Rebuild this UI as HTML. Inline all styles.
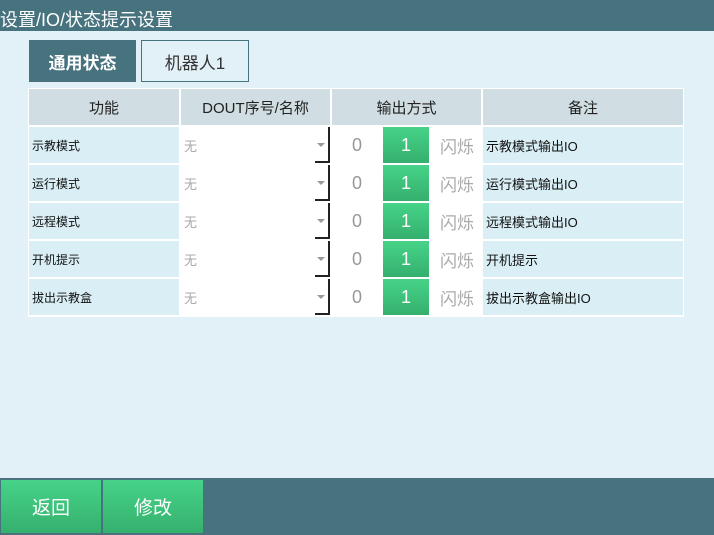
<!DOCTYPE html><html><head><meta charset="utf-8"><style>
*{margin:0;padding:0;box-sizing:border-box}
body{width:714px;height:535px;background:#e2f1f7;position:relative;overflow:hidden;font-family:"Liberation Sans","Noto Sans CJK SC",sans-serif}
.a{position:absolute}
.t{display:flex;align-items:center;justify-content:center}
.hd{background:#d0dde2;color:#222;font-size:15px}
.c1{background:#d9eff5;font-size:12px;color:#111;padding-left:3px;display:flex;align-items:center}
.dd{background:#fff;color:#aaa;font-size:13px;padding-left:3px;display:flex;align-items:center;border-right:2px solid #222}
.btn{background:linear-gradient(#46d388,#35b06e);color:#fff}
</style></head><body>
<div class="a" style="left:0;top:0;width:714px;height:31px;background:#47737f"></div>
<div class="a" style="left:0;top:8px;color:#fff;font-size:18px;line-height:24px">设置/IO/状态提示设置</div>
<div class="a t" style="left:29px;top:40px;width:107px;height:42px;background:#47737f;color:#fff;font-size:17px;font-weight:bold">通用状态</div>
<div class="a t" style="left:141px;top:40px;width:108px;height:42px;border:1px solid #47737f;color:#333;font-size:17px">机器人1</div>
<div class="a" style="left:28px;top:88px;width:656px;height:229px;background:#fff"></div>
<div class="a t hd" style="left:29px;top:89px;width:150px;height:36px">功能</div>
<div class="a t hd" style="left:181px;top:89px;width:149px;height:36px">DOUT序号/名称</div>
<div class="a t hd" style="left:332px;top:89px;width:149px;height:36px">输出方式</div>
<div class="a t hd" style="left:483px;top:89px;width:200px;height:36px">备注</div>
<div id="rows"></div>
<script>
var f=["示教模式","运行模式","远程模式","开机提示","拔出示教盒"],n=["示教模式输出IO","运行模式输出IO","远程模式输出IO","开机提示","拔出示教盒输出IO"],h="";
for(var i=0;i<5;i++){var y=127+i*38;
h+='<div class="a c1" style="left:29px;top:'+y+'px;width:150px;height:36px">'+f[i]+'</div>';
h+='<div class="a dd" style="left:181px;top:'+y+'px;width:149px;height:36px">无</div>';
h+='<div class="a" style="left:315px;top:'+(y+34)+'px;width:15px;height:2px;background:#222"></div>';
h+='<div class="a" style="left:317px;top:'+(y+16)+'px;width:0;height:0;border-left:4px solid transparent;border-right:4px solid transparent;border-top:4px solid #999"></div>';
h+='<div class="a" style="left:332px;top:'+y+'px;width:149px;height:36px;background:#fff"></div>';
h+='<div class="a t" style="left:344px;top:'+y+'px;width:26px;height:36px;color:#999;font-size:18px">0</div>';
h+='<div class="a t btn" style="left:383px;top:'+y+'px;width:46px;height:36px;font-size:18px">1</div>';
h+='<div class="a t" style="left:437px;top:'+y+'px;width:40px;height:36px;color:#aaa;font-size:17px">闪烁</div>';
h+='<div class="a c1" style="left:483px;top:'+y+'px;width:200px;height:36px;font-size:13px">'+n[i]+'</div>';}
document.getElementById("rows").innerHTML=h;
</script>
<div class="a" style="left:0;top:478px;width:714px;height:57px;background:#47737f"></div>
<div class="a t btn" style="left:1px;top:480px;width:100px;height:53px;font-size:19px">返回</div>
<div class="a t btn" style="left:103px;top:480px;width:100px;height:53px;font-size:19px">修改</div>
</body></html>
